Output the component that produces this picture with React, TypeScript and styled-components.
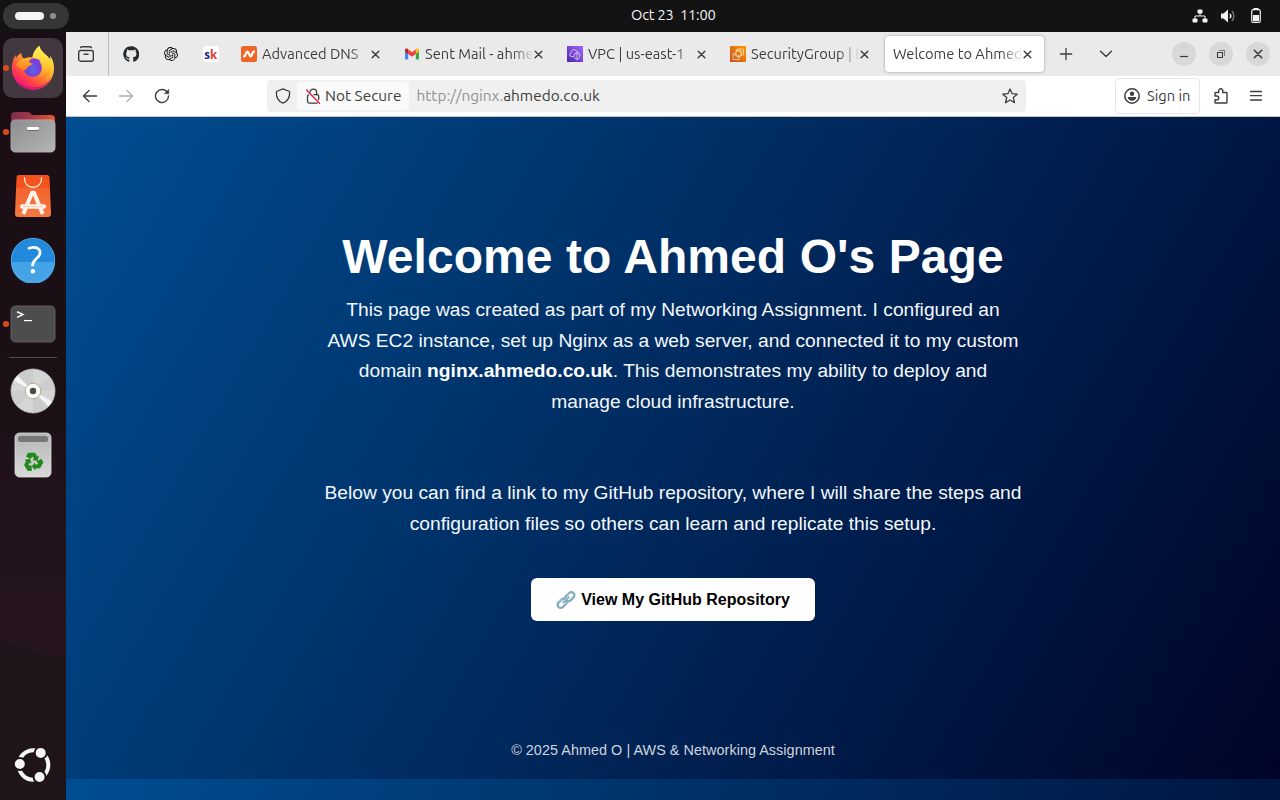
import React from "react";
import styled, { createGlobalStyle, css } from "styled-components";
import { SiOpenai } from "react-icons/si";
import { FaGithub } from "react-icons/fa";

const GlobalStyle = createGlobalStyle`
  * { box-sizing: border-box; }
  body { margin: 0; overflow: hidden; background: #1b0f16; }
  svg { display: block; flex: none; }
`;

const uiFont = `"Ubuntu Sans", Ubuntu, "Noto Sans", sans-serif`;

const Desktop = styled.div`
  width: 1280px;
  height: 800px;
  display: flex;
  flex-direction: column;
  overflow: hidden;
  font-family: ${uiFont};
`;

const TopBar = styled.header`
  height: 32px;
  flex: none;
  display: grid;
  grid-template-columns: 628px auto 1fr;
  align-items: center;
  padding: 0 16px 0 3px;
  background: #131313;
  color: #f2f2f2;
`;

const Workspaces = styled.div`
  width: 66px;
  height: 26px;
  border-radius: 13px;
  background: #363636;
  display: flex;
  align-items: center;
  padding-left: 12px;
  gap: 6px;
`;
const ActiveDot = styled.span`
  width: 29px;
  height: 8px;
  border-radius: 4px;
  background: #f4f4f4;
`;
const IdleDot = styled.span`
  width: 6px;
  height: 6px;
  border-radius: 50%;
  background: #8f8f8f;
`;
const Clock = styled.time`
  font-size: 14.67px;
  line-height: 31px;
  height: 32px;
  letter-spacing: -0.2px;
  white-space: pre;
`;
const Tray = styled.div`
  justify-self: end;
  display: flex;
  align-items: center;
  gap: 12px;
`;

const Body = styled.div`
  flex: 1;
  display: flex;
  min-height: 0;
`;

const Dock = styled.nav`
  width: 66px;
  flex: none;
  display: flex;
  flex-direction: column;
  align-items: center;
  gap: 4px;
  padding: 6px 0 5px;
  background:
    linear-gradient(196deg, transparent 0 603px, #1f1419 604px) ,
    linear-gradient(180deg, #1a0e14 0%, #1c1017 50%, #23131c 62%, #27161f 100%);
`;
const DockItem = styled.div<{ $active?: boolean; $running?: boolean; $last?: boolean }>`
  width: 60px;
  height: 60px;
  flex: none;
  display: flex;
  align-items: center;
  justify-content: center;
  position: relative;
  border-radius: 10px;
  ${(p) => p.$active && css`background: #433740;`}
  ${(p) => p.$last && css`margin-top: auto;`}
  ${(p) =>
    p.$running &&
    css`
      &::before {
        content: "";
        position: absolute;
        left: 0;
        top: 27px;
        width: 5.5px;
        height: 5.5px;
        border-radius: 50%;
        background: #d94a1b;
      }
    `}
`;
const DockRule = styled.hr`
  width: 48px;
  height: 1px;
  margin: -1px 0;
  border: 0;
  flex: none;
  background: #53484e;
`;

const Browser = styled.main`
  flex: 1;
  min-width: 0;
  display: flex;
  flex-direction: column;
  color: #3d3d3d;
`;

const TabStrip = styled.div`
  height: 44px;
  flex: none;
  display: flex;
  background: #eaeaea;
`;
const OverviewButton = styled.div`
  width: 43px;
  margin-right: 2px;
  padding-left: 12px;
  border-right: 1px solid #bdbdbd;
  display: flex;
  align-items: center;
`;
const PinnedTab = styled.div`
  width: 40px;
  display: flex;
  align-items: center;
  justify-content: center;
`;
const Tab = styled.div<{ $selected?: boolean }>`
  width: 159px;
  height: 36px;
  flex: none;
  margin: 4px 2px;
  padding: 0 12px 0 8px;
  border-radius: 4px;
  display: flex;
  align-items: center;
  ${(p) =>
    p.$selected &&
    css`
      background: #fff;
      box-shadow: 0 0 3px rgba(0, 0, 0, 0.36);
    `}
`;
const TabTitle = styled.span<{ $lead?: boolean }>`
  flex: 1;
  min-width: 0;
  margin-left: ${(p) => (p.$lead ? 0 : 5)}px;
  overflow: hidden;
  white-space: nowrap;
  font-size: 14.67px;
  line-height: 37px;
  mask-image: linear-gradient(to left, transparent 0, #000 22px);
`;
const StripButton = styled.div<{ $left: number }>`
  margin-left: ${(p) => p.$left}px;
  display: flex;
  align-items: center;
`;
const WindowControls = styled.div`
  margin-left: auto;
  padding-right: 10px;
  display: flex;
  align-items: center;
  gap: 13px;
`;
const WindowButton = styled.div`
  width: 24px;
  height: 24px;
  border-radius: 50%;
  background: #d8d8d8;
  display: flex;
  align-items: center;
  justify-content: center;
`;

const Toolbar = styled.div`
  height: 41px;
  flex: none;
  display: flex;
  align-items: center;
  padding: 0 16px 0 16px;
  background: #fff;
  border-bottom: 1px solid #c4c4c4;
`;
const NavButtons = styled.div`
  display: flex;
  gap: 20px;
  width: 185px;
  flex: none;
`;
const AddressBar = styled.div`
  width: 759px;
  height: 32px;
  flex: none;
  display: flex;
  align-items: center;
  padding: 0 8px;
  border-radius: 4px;
  background: #f0f0f0;
`;
const Security = styled.div`
  width: 112px;
  height: 28px;
  margin-left: 6px;
  padding-left: 8px;
  display: flex;
  align-items: center;
  gap: 4px;
  border-radius: 4px;
  background: #fafafa;
  font-size: 15.4px;
  white-space: nowrap;
`;
const Address = styled.span`
  flex: 1;
  margin-left: 7.5px;
  font-size: 15.4px;
  color: #939393;
  b { font-weight: 400; color: #3d3d3d; }
`;
const SignIn = styled.div`
  width: 85px;
  height: 36px;
  margin-left: auto;
  padding-left: 8px;
  display: flex;
  align-items: center;
  gap: 7px;
  border: 1px solid #e6e6e6;
  border-radius: 4px;
  font-size: 14.67px;
  white-space: nowrap;
`;
const ToolIcons = styled.div`
  display: flex;
  gap: 19px;
  margin-left: 13px;
`;

const Page = styled.section`
  flex: 1;
  display: flex;
  flex-direction: column;
  align-items: center;
  background: linear-gradient(120deg, #004e92, #000428) 0 0 / 100% 662px;
  color: #fff;
  font-family: "Liberation Sans", Arial, sans-serif;
  text-align: center;
`;
const Heading = styled.h1`
  margin: 112px 0 11px;
  font-size: 48px;
  line-height: 55px;
  letter-spacing: 0.08px;
`;
const Copy = styled.p`
  width: 699px;
  margin: 0;
  font-size: 19.2px;
  line-height: 30.72px;
  letter-spacing: 0.01px;
  color: #f4f8fc;
  strong { color: #fff; }
  & + & { margin-top: 60.5px; }
`;
const RepoLink = styled.a`
  width: 284px;
  height: 43px;
  margin-top: 38px;
  display: flex;
  align-items: center;
  justify-content: center;
  gap: 5px;
  padding-top: 1px;
  border-radius: 6px;
  background: #fff;
  color: #000;
  font-size: 16px;
  line-height: 18px;
  font-weight: 700;
`;
const Footer = styled.footer`
  margin-top: 121px;
  font-size: 14.4px;
  line-height: 17px;
  letter-spacing: 0.045px;
  color: #cfd4dd;
`;

const stroke = {
  fill: "none",
  stroke: "currentColor",
  strokeWidth: 1.4,
  strokeLinecap: "round" as const,
  strokeLinejoin: "round" as const,
};

const Cross = ({ size = 9 }: { size?: number }) => (
  <svg width={size} height={size} viewBox="0 0 10 10" {...stroke} strokeWidth={1.6}>
    <path d="M1.3 1.3 8.7 8.7M8.7 1.3 1.3 8.7" />
  </svg>
);

const FirefoxIcon = () => (
  <svg width="46" height="46" viewBox="0 0 46 46">
    <defs>
      <linearGradient id="fxBody" x1="0.85" y1="0.1" x2="0.2" y2="0.95">
        <stop offset="0" stopColor="#fff04a" />
        <stop offset="0.3" stopColor="#ffc02b" />
        <stop offset="0.55" stopColor="#ff7a2e" />
        <stop offset="0.78" stopColor="#ff3b4d" />
        <stop offset="1" stopColor="#e80e80" />
      </linearGradient>
      <linearGradient id="fxFlame" x1="0.5" y1="0" x2="0.5" y2="1">
        <stop offset="0" stopColor="#fff35a" />
        <stop offset="0.5" stopColor="#ffd43a" />
        <stop offset="1" stopColor="#ff9a2a" stopOpacity="0.4" />
      </linearGradient>
      <radialGradient id="fxGlobe" cx="0.5" cy="0.6" r="0.6">
        <stop offset="0" stopColor="#5b63f0" />
        <stop offset="0.6" stopColor="#6f45d8" />
        <stop offset="1" stopColor="#a02fd0" />
      </radialGradient>
      <linearGradient id="fxFox" x1="0" y1="0" x2="0" y2="1">
        <stop offset="0" stopColor="#ffb52b" />
        <stop offset="1" stopColor="#ff7b22" />
      </linearGradient>
    </defs>
    <path
      d="M29.300 .8c-3.600 3-6.400 7.200-6.800 11.500-3.500-.2-6 .2-8.500 1.400-1.800-1.400-2.600-3.400-2.800-5.700-2.100 1.100-4 3-5.200 5.200-.4-1-.4-2.200-.2-3.500C3.300 13 1.800 18.500 1.800 23.800 2 35.700 11.500 44.700 23 44.700c11.700 0 21-9.500 21-21.300 0-5-1.300-9.400-4.200-12.800.4 1.600.5 2.700.3 3.800C37 9.600 30.500 7.200 29.300 .8z"
      fill="url(#fxBody)"
    />
    <path d="M29.300 .8c-3.600 3-6.400 7.200-6.800 11.500 5.500 1.200 9.500 5.200 9.500 11.200 0 4-1.500 6.500-4 8.500 5-.5 10-5 11.500-10 .8-3 .9-5.200.6-7.600C37 9.600 30.500 7.200 29.300 .8z" fill="url(#fxFlame)" />
    <circle cx="22.700" cy="22.800" r="9.200" fill="url(#fxGlobe)" />
    <path d="M23 13.600c3.500-.2 6.500 1 7.500 3.200-1.200-.4-2.300-.5-3-.3 1.500.8 2.500 2 3 3.500-2.500-1.500-4.500-2.500-7.500-3z" fill="#7b3be0" />
    <path d="M6 20.500c1.800-4.200 4.800-6.500 8-6.800 2.500-.5 5.500-.5 8 0-1.500.7-2.500 1.700-3 3 1 .9 1.800 1.500 3.500 1.900.3 1.300-2.800 2-4 2.900-1.400 1-1.700 2.200-3 3.200-1.200.9-3.100.5-4.700-.9-1.700-1.400-3-2.500-4.800-3.300z" fill="url(#fxFox)" />
    <path d="M4 32c4 7 12 10.300 19 10.100 8-.2 14-3.500 17.500-8.600C37.500 40.500 30.500 44.700 23 44.700 14.500 44.700 7 39.500 4 32z" fill="#d8107c" opacity="0.75" />
  </svg>
);

const FilesIcon = () => (
  <svg width="46" height="42" viewBox="0 0 46 42">
    <defs>
      <linearGradient id="folderBack" x1="0" y1="0" x2="1" y2="0.2">
        <stop offset="0" stopColor="#7c2a52" />
        <stop offset="0.5" stopColor="#a63a45" />
        <stop offset="1" stopColor="#e5572a" />
      </linearGradient>
      <linearGradient id="folderFront" x1="0" y1="0" x2="1" y2="1">
        <stop offset="0" stopColor="#8d8d8d" />
        <stop offset="1" stopColor="#b5b5b5" />
      </linearGradient>
    </defs>
    <path d="M1 5a4 4 0 0 1 4-4h13c2 0 3 3 5 3h18a4 4 0 0 1 4 4v14H1z" fill="url(#folderBack)" />
    <rect x="0.800" y="8.800" width="44.400" height="32.400" rx="4.500" fill="url(#folderFront)" stroke="#c2c2c2" strokeOpacity=".6" strokeWidth=".7" />
    <rect x="17" y="17" width="12" height="3" rx="1.200" fill="#6d6d6d" />
    <rect x="17" y="16" width="12" height="3" rx="1.200" fill="#fff" />
  </svg>
);

const AppCenterIcon = () => (
  <svg width="38" height="44" viewBox="0 0 38 44">
    <defs>
      <linearGradient id="bag" x1="0" y1="0" x2="0" y2="1">
        <stop offset="0" stopColor="#f4511c" />
        <stop offset="0.300" stopColor="#f4551e" />
        <stop offset="0.310" stopColor="#f5632e" />
        <stop offset="1" stopColor="#f47a40" />
      </linearGradient>
    </defs>
    <path d="M5.500 1h27a3 3 0 0 1 3 3L37 39.500a3.300 3.300 0 0 1-3.300 3.500H4.300A3.300 3.300 0 0 1 1 39.500L2.500 4a3 3 0 0 1 3-3z" fill="url(#bag)" />
    <path d="M10.500 4c0 6 3.500 9.300 8.500 9.300S27.500 10 27.500 4" fill="none" stroke="#fff3ec" strokeWidth="1.300" strokeLinecap="round" />
    <path d="M9.300 40 18 18.800h2L28.700 40" fill="none" stroke="#fff3ec" strokeWidth="4" strokeLinejoin="round" />
    <path d="M8.300 32.400h21.400" stroke="#fff3ec" strokeWidth="4.500" strokeLinecap="round" />
    <path d="M9 32.600h20.500" stroke="#f9c3a8" strokeWidth=".8" />
  </svg>
);

const HelpIcon = () => (
  <svg width="46" height="46" viewBox="0 0 46 46">
    <circle cx="23" cy="23" r="22" fill="#2389da" />
    <path d="M1 25a22 22 0 0 0 44 0z" fill="#43a3e5" />
    <circle cx="23" cy="23" r="21.700" fill="none" stroke="#5fb0ea" strokeWidth=".7" />
    <path d="M18 11.900c1.800-1.100 4-1.700 6-1.600 4 .2 6.300 2.300 6 5.900-.3 3-2.500 4.500-4.500 6.300-2.200 2-3 3.500-3 6.700" fill="none" stroke="#fff" strokeWidth="2.800" />
    <circle cx="22.800" cy="34.300" r="2.300" fill="#fff" />
  </svg>
);

const TerminalIcon = () => (
  <svg width="46" height="38" viewBox="0 0 46 38">
    <rect x="1" y="1" width="44" height="36" rx="4.500" fill="#4d4d4d" stroke="#6a6a6a" strokeWidth=".8" />
    <path d="M7 6.800 13 9.600 7 12.400" fill="none" stroke="#fff" strokeWidth="1.500" />
    <path d="M14 15.600h8" stroke="#fff" strokeWidth="1.200" />
  </svg>
);

const DiscIcon = () => (
  <svg width="46" height="46" viewBox="0 0 46 46">
    <circle cx="23" cy="23" r="22" fill="#d5d5d5" stroke="#bcbcbc" strokeWidth=".8" />
    <path d="M23 23V1.500A21.500 21.500 0 0 0 9 7zM23 23v21.500A21.500 21.500 0 0 0 37 39z" fill="#cbcbcb" />
    <path d="M23 23H1.500a21.500 21.500 0 0 0 6 15zM23 23h21.500A21.500 21.500 0 0 0 39 9z" fill="#cdcdcd" />
    <path d="M23 23 4 12.500A22 22 0 0 1 7.500 8zM23 23l19 10.500A22 22 0 0 1 38.500 38z" fill="#f6f6f6" />
    <circle cx="23" cy="23" r="7.800" fill="#fafafa" stroke="#b8ab90" />
    <circle cx="23" cy="23" r="3.200" fill="#4b4b4b" />
  </svg>
);

const TrashIcon = () => (
  <svg width="38" height="46" viewBox="0 0 38 46">
    <defs>
      <linearGradient id="bin" x1="0" y1="0" x2="0" y2="1">
        <stop offset="0" stopColor="#b5b5b5" />
        <stop offset="1" stopColor="#d9d9d9" />
      </linearGradient>
    </defs>
    <rect x="1" y="1" width="36" height="44" rx="4.500" fill="url(#bin)" stroke="#dedede" strokeWidth=".8" />
    <rect x="4" y="4" width="30" height="6" rx="2.500" fill="#777" />
    <g fill="#22891c">
      <path d="M13.800 20.600h6.800l2.500 3.800 1.700-1-1.600 5.400-5.200-.9 1.800-1-1.700-2.700-1.800 2.700-4.700-2.700z" transform="translate(.3 .2)" />
      <path d="M13.800 20.600h6.800l2.500 3.800 1.700-1-1.600 5.400-5.200-.9 1.800-1-1.700-2.700-1.800 2.700-4.700-2.700z" transform="rotate(120 19 30) translate(.3 .2)" />
      <path d="M13.800 20.600h6.800l2.500 3.800 1.700-1-1.600 5.400-5.200-.9 1.800-1-1.700-2.700-1.800 2.700-4.700-2.700z" transform="rotate(240 19 30) translate(.3 .2)" />
    </g>
  </svg>
);

const UbuntuIcon = () => (
  <svg width="38" height="38" viewBox="0 0 38 38">
    <circle cx="19.500" cy="19" r="14.800" fill="none" stroke="#f5f5f5" strokeWidth="4" />
    <g fill="#f5f5f5" stroke="#1f1319" strokeWidth="2">
      <circle cx="5.800" cy="18" r="6" />
      <circle cx="26.700" cy="6.900" r="6" />
      <circle cx="25.600" cy="31" r="6" />
    </g>
  </svg>
);

const NetworkIcon = () => (
  <svg width="16" height="16" viewBox="0 0 16 16" fill="#f2f2f2">
    <rect x="5.500" y="1.500" width="5" height="4" rx="1" />
    <rect x="0.500" y="10.500" width="5" height="4" rx="1" />
    <rect x="10.500" y="10.500" width="5" height="4" rx="1" />
    <path d="M8 5v3M3 11V8h10v3" fill="none" stroke="#f2f2f2" />
  </svg>
);
const VolumeIcon = () => (
  <svg width="16" height="16" viewBox="0 0 16 16">
    <path d="M1 5.500h2.500L8 1.500v13l-4.500-4H1z" fill="#f2f2f2" />
    <path d="M10 5.800q1.600 2.200 0 4.400" fill="none" stroke="#f2f2f2" strokeWidth="1.400" />
    <path d="M12 3q3.800 5 0 10" fill="none" stroke="#777" strokeWidth="1.400" />
  </svg>
);
const BatteryIcon = () => (
  <svg width="16" height="16" viewBox="0 0 16 16">
    <path d="M5.500 0h5v2h-5z" fill="#f2f2f2" />
    <rect x="3.700" y="1.700" width="8.600" height="12.800" rx="1.800" fill="none" stroke="#f2f2f2" strokeWidth="1.200" />
    <rect x="5" y="7" width="6" height="6.300" fill="#f2f2f2" />
  </svg>
);

const OverviewIcon = () => (
  <svg width="16" height="16" viewBox="0 0 16 16" {...stroke}>
    <path d="M2.500 1.600Q3 .8 4 .8h8q1 0 1.500.8" />
    <rect x="0.700" y="4.500" width="14.600" height="10.700" rx="2" />
    <path d="M6 8.300h4" />
  </svg>
);

const SkillsFavicon = () => (
  <svg width="16" height="16" viewBox="0 0 16 16">
    <rect width="16" height="16" rx="3" fill="#fff" />
    <text x="1.300" y="12.500" fontFamily="Open Sans" fontWeight="700" fontSize="11.500" fill="#23268c">s</text>
    <text x="7" y="12.500" fontFamily="Open Sans" fontWeight="700" fontSize="11.500" fill="#e03a2c">k</text>
  </svg>
);
const NamecheapFavicon = () => (
  <svg width="16" height="16" viewBox="0 0 16 16">
    <rect width="16" height="16" rx="2.500" fill="#f06424" />
    <path d="M3 10.300C5 10.300 4.800 5.700 6.300 5.700S8.300 10.300 9.800 10.300 11 5.700 13 5.700" fill="none" stroke="#fff" strokeWidth="2.300" strokeLinecap="round" />
  </svg>
);
const GmailFavicon = () => (
  <svg width="16" height="16" viewBox="0 0 16 16">
    <path d="M1 4.500v8q0 1 1 1h2.200V6.500z" fill="#4285f4" />
    <path d="M15 4.500v8q0 1-1 1h-2.200V6.500z" fill="#34a853" />
    <path d="M11.800 4v4L15 5.700V4.200c0-1.500-1.500-2.200-2.600-1.400z" fill="#fbbc04" />
    <path d="M4.200 8V3.300L8 6.200l3.800-2.900V8L8 10.800z" fill="#ea4335" />
    <path d="M1 4.200v1.500L4.200 8V3.300l-.6-.5C2.500 2 1 2.700 1 4.200z" fill="#c5221f" />
  </svg>
);
const VpcFavicon = () => (
  <svg width="16" height="16" viewBox="0 0 16 16">
    <defs>
      <linearGradient id="vpc" x1="0" y1="1" x2="1" y2="0">
        <stop stopColor="#4d27a8" />
        <stop offset="1" stopColor="#a166ff" />
      </linearGradient>
    </defs>
    <path d="M0 0h16v16H0z" fill="url(#vpc)" />
    <g fill="none" stroke="#e7dcff" strokeWidth=".8">
      <path d="M6.500 10.500H4.300C2.300 10.500 2.300 7.600 4 7.200 3.600 3.200 8.700 2.700 9.300 5.400c1.200-.6 2.200.2 2.300 1.300" />
      <path d="M10 6.800 12.800 8v2.500c0 1.500-1.500 2.500-2.800 3-1.300-.5-2.800-1.500-2.800-3V8zM10 6.800v6.500" />
    </g>
  </svg>
);
const Ec2Favicon = () => (
  <svg width="16" height="16" viewBox="0 0 16 16">
    <defs>
      <linearGradient id="ec2" x1="0" y1="1" x2="1" y2="0">
        <stop stopColor="#c8511b" />
        <stop offset="1" stopColor="#f90" />
      </linearGradient>
    </defs>
    <path d="M0 0h16v16H0z" fill="url(#ec2)" />
    <g fill="none" stroke="#fff1dc" strokeWidth=".8">
      <rect x="6" y="5" width="5" height="5" />
      <path d="M5.500 7.500H3v6h6V10.500M7 5V3h6.500v6H11M7.500 3.500V5M9.500 3v2M11 6h1.500M11 8h1.500M7.500 10v1.500M9.500 10v1.500M4.500 9H6" strokeWidth=".65" />
    </g>
  </svg>
);

const BackIcon = ({ flip }: { flip?: boolean }) => (
  <svg width="16" height="16" viewBox="0 0 16 16" {...stroke} color={flip ? "#aeaeae" : "#3d3d3d"} transform={flip ? "scale(-1 1)" : undefined}>
    <path d="M14.500 8H1.500M7 2.500 1.500 8 7 13.500" />
  </svg>
);
const ReloadIcon = () => (
  <svg width="16" height="16" viewBox="0 0 16 16" {...stroke}>
    <path d="M13.300 4.300A6.500 6.500 0 1 0 14.500 8" />
    <path d="M14.800 1.500v4.300h-4.300z" fill="currentColor" strokeWidth=".5" />
  </svg>
);
const ShieldIcon = () => (
  <svg width="16" height="16" viewBox="0 0 16 16" {...stroke} strokeWidth={1.300}>
    <path d="M8 .9 14.600 3.500c.4 5-1.800 9.800-6.600 11.700C3.200 13.300 1 8.500 1.400 3.500z" />
  </svg>
);
const LockIcon = () => (
  <svg width="16" height="16" viewBox="0 0 16 16" {...stroke} strokeWidth={1.300}>
    <path d="M5 4.200a3.200 3.200 0 0 1 6.600 .3V6.700" />
    <path d="M9 6.700h3c1 0 1.700.6 1.700 1.600V11.500M3.700 6.900c-.8.200-1.200.8-1.200 1.600v4.800c0 1 .7 1.800 1.700 1.800h8" />
    <path d="M1.500 2 14.500 15.300" stroke="#e6194b" />
  </svg>
);
const StarIcon = () => (
  <svg width="16" height="16" viewBox="0 0 16 16" {...stroke} strokeWidth={1.300}>
    <path d="m8 1 2.100 4.700 5.100.5-3.900 3.400 1.200 5.100L8 12l-4.500 2.700 1.200-5.100L.8 6.200l5.100-.5z" />
  </svg>
);
const AccountIcon = () => (
  <svg width="16" height="16" viewBox="0 0 16 16">
    <circle cx="8" cy="8" r="7.200" fill="none" stroke="#3d3d3d" strokeWidth="1.500" />
    <circle cx="8" cy="5.800" r="2.200" fill="#3d3d3d" />
    <path d="M3.700 9h8.600c-.3 2.500-2 3.800-4.300 3.800S4 11.500 3.700 9z" fill="#3d3d3d" />
  </svg>
);
const PuzzleIcon = () => (
  <svg width="16" height="16" viewBox="0 0 16 16" {...stroke}>
    <path d="M2 8V5.200q0-.7.700-.7h3V2.800a2 2 0 0 1 4 0v1.700h3.600q.7 0 .7.700v9q0 .8-.7.800H2.700q-.7 0-.7-.8v-2.400h1.800a1.900 1.900 0 0 0 0-3.800z" />
  </svg>
);
const MenuIcon = () => (
  <svg width="16" height="16" viewBox="0 0 16 16" {...stroke} strokeWidth={1.300}>
    <path d="M2.500 3.500h11M2.500 7.700h11M2.500 12h11" />
  </svg>
);
const ChainIcon = () => (
  <svg width="20" height="20" viewBox="0 0 20 20" fill="none" strokeLinecap="round">
    <g stroke="#82aebf" strokeWidth="2.300">
      <rect x="8.600" y="3.600" width="10.400" height="6.200" rx="3.100" transform="rotate(-45 13.800 6.700)" />
      <rect x="1" y="10.200" width="10.400" height="6.200" rx="3.100" transform="rotate(-45 6.200 13.300)" />
      <path d="m7.500 12.300 5-5" />
    </g>
    <path d="M11 4.200 13 2.300M3.200 11.500l2.200-2M8 11l3.700-3.700" stroke="#b9d6df" strokeWidth=".8" />
  </svg>
);

export default function App() {
  return (
    <Desktop>
      <GlobalStyle />
      <TopBar>
        <Workspaces><ActiveDot /><IdleDot /></Workspaces>
        <Clock>{"Oct 23  11:00"}</Clock>
        <Tray><NetworkIcon /><VolumeIcon /><BatteryIcon /></Tray>
      </TopBar>
      <Body>
        <Dock>
          <DockItem $active $running><FirefoxIcon /></DockItem>
          <DockItem $running><FilesIcon /></DockItem>
          <DockItem><AppCenterIcon /></DockItem>
          <DockItem><HelpIcon /></DockItem>
          <DockItem $running><TerminalIcon /></DockItem>
          <DockRule />
          <DockItem><DiscIcon /></DockItem>
          <DockItem><TrashIcon /></DockItem>
          <DockItem $last><UbuntuIcon /></DockItem>
        </Dock>
        <Browser>
          <TabStrip>
            <OverviewButton><OverviewIcon /></OverviewButton>
            <PinnedTab><FaGithub size={16.500} color="#24292f" /></PinnedTab>
            <PinnedTab><SiOpenai size={14} color="#111" /></PinnedTab>
            <PinnedTab><SkillsFavicon /></PinnedTab>
            <Tab><NamecheapFavicon /><TabTitle>Advanced DNS</TabTitle><Cross /></Tab>
            <Tab><GmailFavicon /><TabTitle>Sent Mail - ahmed</TabTitle><Cross /></Tab>
            <Tab><VpcFavicon /><TabTitle>VPC | us-east-1</TabTitle><Cross /></Tab>
            <Tab><Ec2Favicon /><TabTitle>SecurityGroup | EC2</TabTitle><Cross /></Tab>
            <Tab $selected><TabTitle $lead>Welcome to Ahmed O</TabTitle><Cross /></Tab>
            <StripButton $left={12.500}>
              <svg width="14" height="14" viewBox="0 0 14 14" {...stroke} strokeWidth={1.300}><path d="M7 1.300v11.400M1.300 7h11.400" /></svg>
            </StripButton>
            <StripButton $left={26.500}>
              <svg width="14" height="14" viewBox="0 0 14 14" {...stroke}><path d="M1.500 4.200 7 9.600l5.500-5.400" /></svg>
            </StripButton>
            <WindowControls>
              <WindowButton>
                <svg width="10" height="10" viewBox="0 0 10 10" {...stroke} strokeLinecap="butt" strokeWidth={1.200}><path d="M1 7.500h8" /></svg>
              </WindowButton>
              <WindowButton>
                <svg width="10" height="10" viewBox="0 0 10 10" {...stroke} strokeWidth={1.100}><path d="M1.500 3.500h5v5h-5z" /><path d="M3.500 1.500h5v5" opacity=".6" /></svg>
              </WindowButton>
              <WindowButton><Cross size={10} /></WindowButton>
            </WindowControls>
          </TabStrip>
          <Toolbar>
            <NavButtons><BackIcon /><BackIcon flip /><ReloadIcon /></NavButtons>
            <AddressBar>
              <ShieldIcon />
              <Security><LockIcon />Not Secure</Security>
              <Address>http://nginx.<b>ahmedo.co.uk</b></Address>
              <StarIcon />
            </AddressBar>
            <SignIn><AccountIcon />Sign in</SignIn>
            <ToolIcons><PuzzleIcon /><MenuIcon /></ToolIcons>
          </Toolbar>
          <Page>
            <Heading>Welcome to Ahmed O's Page</Heading>
            <Copy>
              This page was created as part of my Networking Assignment. I configured an AWS EC2
              instance, set up Nginx as a web server, and connected it to my custom domain{" "}
              <strong>nginx.ahmedo.co.uk</strong>. This demonstrates my ability to deploy and manage
              cloud infrastructure.
            </Copy>
            <Copy>
              Below you can find a link to my GitHub repository, where I will share the steps and
              configuration files so others can learn and replicate this setup.
            </Copy>
            <RepoLink><ChainIcon />View My GitHub Repository</RepoLink>
            <Footer>© 2025 Ahmed O | AWS &amp; Networking Assignment</Footer>
          </Page>
        </Browser>
      </Body>
    </Desktop>
  );
}
